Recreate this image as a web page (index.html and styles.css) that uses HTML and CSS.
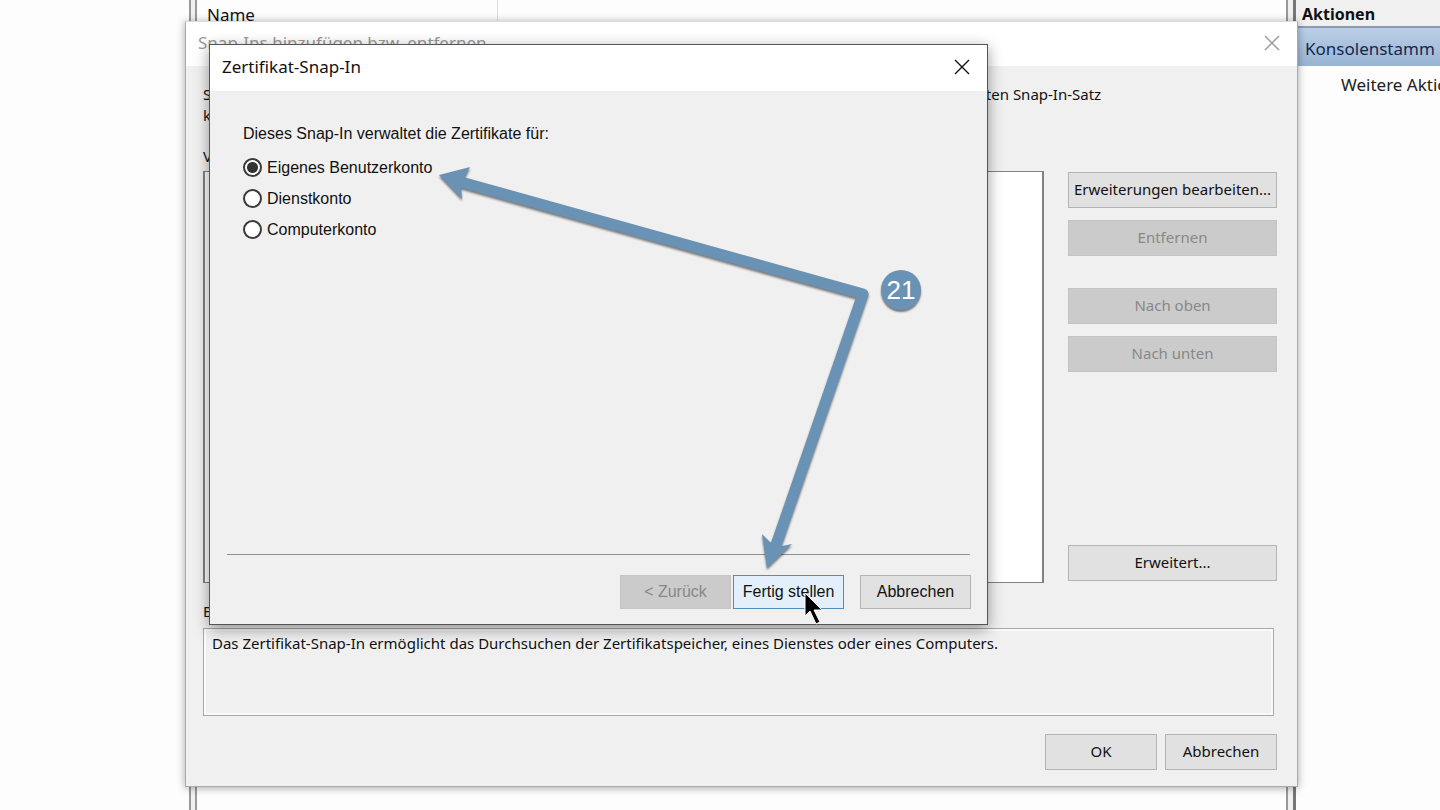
FILE: index.html
```
<!DOCTYPE html>
<html lang="de">
<head>
<meta charset="utf-8">
<title>Zertifikat-Snap-In</title>
<link rel="stylesheet" href="styles.css">
</head>
<body>
<main class="console">
  <div class="tree-pane"></div>
  <div class="splitter"></div>
  <section class="result-pane">
    <div class="column-header">Name</div>
  </section>
  <div class="splitter splitter-right"></div>
  <aside class="actions-pane">
    <h2 class="actions-title">Aktionen</h2>
    <div class="actions-group">Konsolenstamm</div>
    <a class="actions-link" href="#">Weitere Aktionen</a>
  </aside>
</main>

<section class="window snapins" aria-labelledby="snapins-title">
  <header class="titlebar">
    <h1 id="snapins-title" class="title">Snap-Ins hinzufügen bzw. entfernen</h1>
    <button class="close" aria-label="Schließen"><svg width="16" height="16" viewBox="0 0 16 16"><path d="M1 1L15 15M15 1L1 15"/></svg></button>
  </header>
  <div class="snapins-body">
    <p class="intro">Sie können aus den auf diesem Computer verfügbaren Snap-Ins auswählen und den für die Konsole ausgewählten Snap-In-Satz<br>konfigurieren.</p>
    <p class="list-label">Verfügbare Snap-Ins:</p>
    <div class="lists">
      <div class="listbox"></div>
      <div class="side-buttons">
        <button class="btn">Erweiterungen bearbeiten...</button>
        <button class="btn" disabled>Entfernen</button>
        <button class="btn group-start" disabled>Nach oben</button>
        <button class="btn" disabled>Nach unten</button>
        <button class="btn push-end">Erweitert...</button>
      </div>
    </div>
    <p class="desc-label">Beschreibung:</p>
    <div class="description">Das Zertifikat-Snap-In ermöglicht das Durchsuchen der Zertifikatspeicher, eines Dienstes oder eines Computers.</div>
    <footer class="snapins-footer">
      <button class="btn">OK</button>
      <button class="btn">Abbrechen</button>
    </footer>
  </div>
</section>

<section class="window wizard" aria-labelledby="wizard-title">
  <header class="titlebar">
    <h1 id="wizard-title" class="title">Zertifikat-Snap-In</h1>
    <button class="close" aria-label="Schließen"><svg width="16" height="16" viewBox="0 0 16 16"><path d="M1 1L15 15M15 1L1 15"/></svg></button>
  </header>
  <fieldset class="choices">
    <legend>Dieses Snap-In verwaltet die Zertifikate für:</legend>
    <label class="choice"><input type="radio" name="account" checked>Eigenes Benutzerkonto</label>
    <label class="choice"><input type="radio" name="account">Dienstkonto</label>
    <label class="choice"><input type="radio" name="account">Computerkonto</label>
  </fieldset>
  <footer class="wizard-footer">
    <button class="btn" disabled>&lt; Zurück</button>
    <button class="btn hot">Fertig stellen</button>
    <button class="btn cancel">Abbrechen</button>
  </footer>
</section>

<svg class="arrows" width="450" height="420" viewBox="430 160 450 420" aria-hidden="true">
  <path class="shaft" d="M461 182L863 294L775 548"/>
  <path class="head" d="M439 175L470 167L465 177L461 188L462 199Z"/>
  <path class="head" d="M767 568L762 534L770 542L782 546L792 544Z"/>
</svg>
<span class="step">21</span>
<svg class="pointer" width="20" height="34" viewBox="0 0 20 34" aria-hidden="true">
  <path d="M1 1V24L6 19L12 32L16 30L10 18H18Z"/>
</svg>
</body>
</html>
```
FILE: styles.css
```
* {
  box-sizing: border-box;
}

body {
  margin: 0;
  position: relative;
  min-height: 100vh;
  overflow: hidden;
  background: #fdfdfd;
  color: #111;
  font: 16px/20px "Noto Sans", "Open Sans", sans-serif;
}

h1, h2, p {
  margin: 0;
  font: inherit;
}

button {
  font: inherit;
  color: inherit;
}

/* Console behind the dialogs */
.console {
  display: flex;
  height: 100vh;
  font-size: 17px;
}

.tree-pane {
  flex: 0 0 189px;
}

.splitter {
  flex: 0 0 8px;
  background: #f0f0f0;
  border: solid #999;
  border-width: 0 2px;
}

.result-pane {
  flex: 1;
}

.column-header {
  width: 301px;
  height: 32px;
  padding: 5px 10px;
  border-right: 1px solid #ddd;
}

.splitter-right {
  flex-basis: 10px;
  border-right: 3px solid #777;
}

.actions-pane {
  flex: 0 0 144px;
  overflow: hidden;
  white-space: nowrap;
}

.actions-title {
  height: 28px;
  padding: 4px 6px;
  background: #f0f0f0;
  border-bottom: 2px solid #8a9db5;
  font-size: 16px;
  font-weight: 700;
}

.actions-group {
  height: 38px;
  padding: 11px 9px;
  background: linear-gradient(#bacfe7, #98b3d3);
  color: #14274d;
}

.actions-link {
  display: block;
  padding: 9px 0 0 45px;
  color: #222;
  text-decoration: none;
}

/* Windows */
.window {
  position: absolute;
  background: #f0f0f0;
}

.titlebar {
  display: flex;
  align-items: center;
  justify-content: space-between;
  background: #fff;
  font-size: 17px;
}

.close {
  display: flex;
  padding: 0;
  border: 0;
  background: none;
}

.close svg {
  fill: none;
  stroke: currentColor;
  stroke-width: 1.4;
}

.btn {
  height: 36px;
  padding: 0 0 2px;
  border: 1px solid #b4b4b4;
  background: #e1e1e1;
  white-space: nowrap;
}

.btn:disabled {
  border-color: #c4c4c4;
  background: #cbcbcb;
  color: #888;
}

.snapins {
  top: 21px;
  left: 185px;
  right: 142px;
  border: 1px solid #aaa;
  border-top-color: #ddd;
  font-size: 15px;
  box-shadow: 0 1px 8px rgba(0, 0, 0, 0.35);
}

.snapins .titlebar {
  height: 44px;
  padding: 0 17px 2px 12px;
  color: #999;
}

.snapins-body {
  padding: 18px 20px 16px 17px;
}

.intro {
  line-height: 21px;
}

.list-label {
  margin: 20px 0 5px;
}

.lists {
  display: flex;
  gap: 24px;
}

.listbox {
  flex: 1;
  border: 2px solid #828282;
  border-width: 1px 2px;
  background: #fff;
}

.side-buttons {
  flex: 0 0 209px;
  display: flex;
  flex-direction: column;
  gap: 12px;
  height: 412px;
  padding: 1px 0 2px;
}

.group-start {
  margin-top: 20px;
}

.push-end {
  margin-top: auto;
}

.desc-label {
  margin: 18px 0 7px;
}

.description {
  min-height: 88px;
  margin-right: 3px;
  padding: 4px 8px;
  border: 1px solid #a8a8a8;
  box-shadow: inset 0 0 0 2px #fafafa;
}

.snapins-footer {
  display: flex;
  justify-content: flex-end;
  gap: 8px;
  margin-top: 18px;
}

.snapins-footer .btn {
  width: 112px;
}

.wizard {
  top: 44px;
  left: 209px;
  right: 452px;
  border: 1px solid #555;
  font-family: "Liberation Sans", Arial, sans-serif;
  box-shadow: 0 4px 14px rgba(0, 0, 0, 0.4);
}

.wizard .titlebar {
  height: 46px;
  padding: 0 17px 2px 12px;
  font-family: "Noto Sans", "Open Sans", sans-serif;
}

.choices {
  height: 464px;
  margin: 0 17px;
  padding: 33px 16px 0;
  border: 0;
  border-bottom: 1px solid #909090;
}

.choices legend {
  float: left;
  width: 100%;
  margin-bottom: 14px;
  padding: 0;
}

.choice {
  clear: both;
  display: flex;
  align-items: center;
  gap: 5px;
  width: max-content;
  height: 19px;
  margin-bottom: 12px;
}

.choice input {
  appearance: none;
  width: 19px;
  height: 19px;
  margin: 0;
  border: 2px solid #3a3a3a;
  border-radius: 50%;
  background: #fff;
}

.choice input:checked {
  background: radial-gradient(circle, #333 5px, #fff 6px);
}

.wizard-footer {
  display: flex;
  justify-content: flex-end;
  gap: 2px;
  padding: 20px 16px 15px;
}

.wizard-footer .btn {
  width: 111px;
  height: 34px;
  padding: 0;
}

.btn.hot {
  border-color: #4f8fb8;
  background: #e3f0fb;
}

.wizard-footer .cancel {
  margin-left: 14px;
}

/* Callout drawn over the windows */
.arrows {
  position: absolute;
  top: 160px;
  left: 430px;
  filter: drop-shadow(0 2px 1px rgba(0, 0, 0, 0.5));
}

.shaft {
  fill: none;
  stroke: #6a92b4;
  stroke-width: 11;
  stroke-linejoin: round;
}

.head {
  fill: #6a92b4;
}

.step {
  position: absolute;
  top: 270px;
  left: 881px;
  width: 40px;
  height: 40px;
  border-radius: 50%;
  background: #6a92b4;
  box-shadow: 0 2px 2px rgba(0, 0, 0, 0.5);
  color: #fff;
  font: 26px/40px "Liberation Sans", Arial, sans-serif;
  text-align: center;
}

.pointer {
  position: absolute;
  top: 592px;
  left: 804px;
  stroke: #fff;
}
```
